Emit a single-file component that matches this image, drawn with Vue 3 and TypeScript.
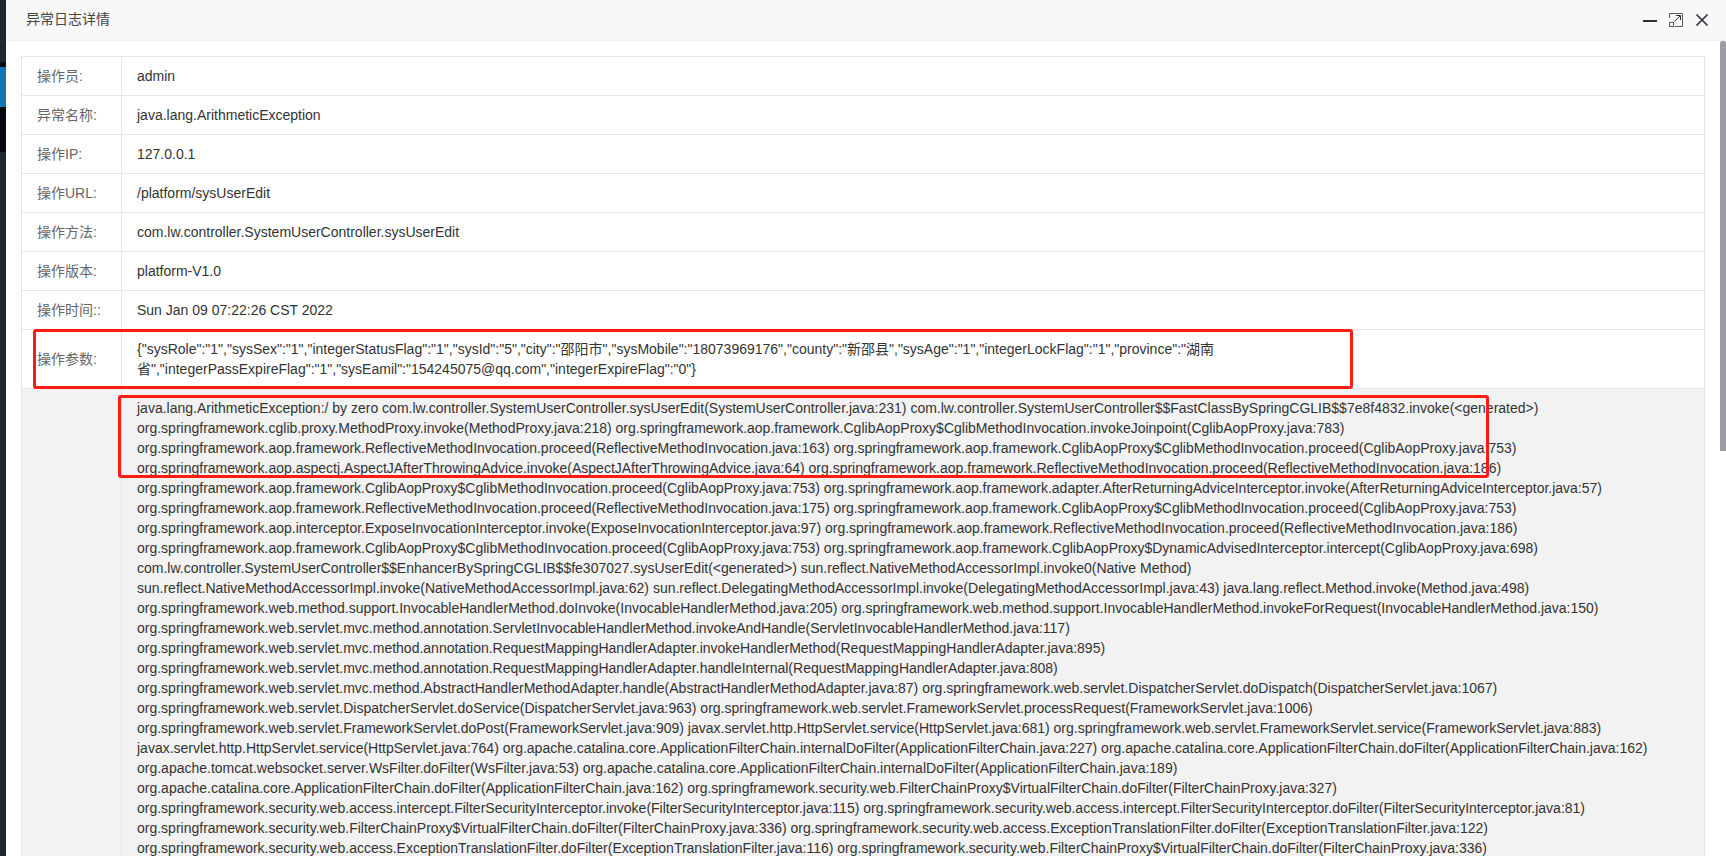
<script setup lang="ts">
interface Row {
  label: string
  value: string
}

const rows: Row[] = [
  { label: '操作员:', value: 'admin' },
  { label: '异常名称:', value: 'java.lang.ArithmeticException' },
  { label: '操作IP:', value: '127.0.0.1' },
  { label: '操作URL:', value: '/platform/sysUserEdit' },
  { label: '操作方法:', value: 'com.lw.controller.SystemUserController.sysUserEdit' },
  { label: '操作版本:', value: 'platform-V1.0' },
  { label: '操作时间::', value: 'Sun Jan 09 07:22:26 CST 2022' },
]

const params: string[] = [
  '{"sysRole":"1","sysSex":"1","integerStatusFlag":"1","sysId":"5","city":"邵阳市","sysMobile":"18073969176","county":"新邵县","sysAge":"1","integerLockFlag":"1","province":"湖南',
  '省","integerPassExpireFlag":"1","sysEamil":"154245075@qq.com","integerExpireFlag":"0"}',
]

const sf = 'org.springframework'
const trace: string[] = [
  'java.lang.ArithmeticException:/ by zero com.lw.controller.SystemUserController.sysUserEdit(SystemUserController.java:231) com.lw.controller.SystemUserController$$FastClassBySpringCGLIB$$7e8f4832.invoke(<generated>)',
  `${sf}.cglib.proxy.MethodProxy.invoke(MethodProxy.java:218) ${sf}.aop.framework.CglibAopProxy$CglibMethodInvocation.invokeJoinpoint(CglibAopProxy.java:783)`,
  `${sf}.aop.framework.ReflectiveMethodInvocation.proceed(ReflectiveMethodInvocation.java:163) ${sf}.aop.framework.CglibAopProxy$CglibMethodInvocation.proceed(CglibAopProxy.java:753)`,
  `${sf}.aop.aspectj.AspectJAfterThrowingAdvice.invoke(AspectJAfterThrowingAdvice.java:64) ${sf}.aop.framework.ReflectiveMethodInvocation.proceed(ReflectiveMethodInvocation.java:186)`,
  `${sf}.aop.framework.CglibAopProxy$CglibMethodInvocation.proceed(CglibAopProxy.java:753) ${sf}.aop.framework.adapter.AfterReturningAdviceInterceptor.invoke(AfterReturningAdviceInterceptor.java:57)`,
  `${sf}.aop.framework.ReflectiveMethodInvocation.proceed(ReflectiveMethodInvocation.java:175) ${sf}.aop.framework.CglibAopProxy$CglibMethodInvocation.proceed(CglibAopProxy.java:753)`,
  `${sf}.aop.interceptor.ExposeInvocationInterceptor.invoke(ExposeInvocationInterceptor.java:97) ${sf}.aop.framework.ReflectiveMethodInvocation.proceed(ReflectiveMethodInvocation.java:186)`,
  `${sf}.aop.framework.CglibAopProxy$CglibMethodInvocation.proceed(CglibAopProxy.java:753) ${sf}.aop.framework.CglibAopProxy$DynamicAdvisedInterceptor.intercept(CglibAopProxy.java:698)`,
  'com.lw.controller.SystemUserController$$EnhancerBySpringCGLIB$$fe307027.sysUserEdit(<generated>) sun.reflect.NativeMethodAccessorImpl.invoke0(Native Method)',
  'sun.reflect.NativeMethodAccessorImpl.invoke(NativeMethodAccessorImpl.java:62) sun.reflect.DelegatingMethodAccessorImpl.invoke(DelegatingMethodAccessorImpl.java:43) java.lang.reflect.Method.invoke(Method.java:498)',
  `${sf}.web.method.support.InvocableHandlerMethod.doInvoke(InvocableHandlerMethod.java:205) ${sf}.web.method.support.InvocableHandlerMethod.invokeForRequest(InvocableHandlerMethod.java:150)`,
  `${sf}.web.servlet.mvc.method.annotation.ServletInvocableHandlerMethod.invokeAndHandle(ServletInvocableHandlerMethod.java:117)`,
  `${sf}.web.servlet.mvc.method.annotation.RequestMappingHandlerAdapter.invokeHandlerMethod(RequestMappingHandlerAdapter.java:895)`,
  `${sf}.web.servlet.mvc.method.annotation.RequestMappingHandlerAdapter.handleInternal(RequestMappingHandlerAdapter.java:808)`,
  `${sf}.web.servlet.mvc.method.AbstractHandlerMethodAdapter.handle(AbstractHandlerMethodAdapter.java:87) ${sf}.web.servlet.DispatcherServlet.doDispatch(DispatcherServlet.java:1067)`,
  `${sf}.web.servlet.DispatcherServlet.doService(DispatcherServlet.java:963) ${sf}.web.servlet.FrameworkServlet.processRequest(FrameworkServlet.java:1006)`,
  `${sf}.web.servlet.FrameworkServlet.doPost(FrameworkServlet.java:909) javax.servlet.http.HttpServlet.service(HttpServlet.java:681) ${sf}.web.servlet.FrameworkServlet.service(FrameworkServlet.java:883)`,
  'javax.servlet.http.HttpServlet.service(HttpServlet.java:764) org.apache.catalina.core.ApplicationFilterChain.internalDoFilter(ApplicationFilterChain.java:227) org.apache.catalina.core.ApplicationFilterChain.doFilter(ApplicationFilterChain.java:162)',
  'org.apache.tomcat.websocket.server.WsFilter.doFilter(WsFilter.java:53) org.apache.catalina.core.ApplicationFilterChain.internalDoFilter(ApplicationFilterChain.java:189)',
  `org.apache.catalina.core.ApplicationFilterChain.doFilter(ApplicationFilterChain.java:162) ${sf}.security.web.FilterChainProxy$VirtualFilterChain.doFilter(FilterChainProxy.java:327)`,
  `${sf}.security.web.access.intercept.FilterSecurityInterceptor.invoke(FilterSecurityInterceptor.java:115) ${sf}.security.web.access.intercept.FilterSecurityInterceptor.doFilter(FilterSecurityInterceptor.java:81)`,
  `${sf}.security.web.FilterChainProxy$VirtualFilterChain.doFilter(FilterChainProxy.java:336) ${sf}.security.web.access.ExceptionTranslationFilter.doFilter(ExceptionTranslationFilter.java:122)`,
  `${sf}.security.web.access.ExceptionTranslationFilter.doFilter(ExceptionTranslationFilter.java:116) ${sf}.security.web.FilterChainProxy$VirtualFilterChain.doFilter(FilterChainProxy.java:336)`,
]
</script>

<template>
  <div class="page">
    <aside class="side">
      <div class="seg-a"></div>
      <div class="seg-b"></div>
      <div class="seg-c"></div>
      <div class="seg-d"></div>
      <div class="seg-e"></div>
    </aside>

    <section class="modal">
      <header class="head">
        <span class="title">异常日志详情</span>
        <div class="tools">
          <svg class="ico" viewBox="0 0 20 20" aria-hidden="true">
            <rect x="3" y="10" width="14" height="2" fill="#2e2d3c" />
          </svg>
          <svg class="ico" viewBox="0 0 20 20" aria-hidden="true">
            <path d="M3.5 8V3.5H16.5V16.5H9" fill="none" stroke="#5a5a66" stroke-width="1" />
            <rect x="3.5" y="12.5" width="4" height="4" fill="none" stroke="#5a5a66" stroke-width="1" />
            <path d="M8.5 11.5L14 6M10 5.5H14.5V10" fill="none" stroke="#2e2d3c" stroke-width="1" />
          </svg>
          <svg class="ico" viewBox="0 0 20 20" aria-hidden="true">
            <path d="M4.5 4.5L15.5 15.5M15.5 4.5L4.5 15.5" fill="none" stroke="#2e2d3c" stroke-width="1.6" />
          </svg>
        </div>
      </header>

      <div class="body">
        <table class="grid">
          <colgroup>
            <col class="col-label" />
            <col />
          </colgroup>
          <tbody>
            <tr v-for="row in rows" :key="row.label">
              <td class="label">{{ row.label }}</td>
              <td class="value">{{ row.value }}</td>
            </tr>
            <tr>
              <td class="label">操作参数:</td>
              <td class="value">
                <div v-for="line in params" :key="line" class="line">{{ line }}</div>
              </td>
            </tr>
            <tr class="shaded">
              <td class="label"></td>
              <td class="value">
                <div v-for="(line, i) in trace" :key="i" class="line">{{ line }}</div>
              </td>
            </tr>
          </tbody>
        </table>
        <div class="mark mark-params"></div>
        <div class="mark mark-trace"></div>
        <div class="thumb"></div>
      </div>
    </section>
  </div>
</template>

<style scoped>
.page {
  display: flex;
  height: 856px;
  overflow: hidden;
  background: #fff;
  font-family: "Liberation Sans", "Noto Sans CJK SC", sans-serif;
  font-size: 14px;
  line-height: 20px;
  color: #333;
}

.side {
  flex: 0 0 6px;
  display: flex;
  flex-direction: column;
}
.seg-a { height: 62px; background: #1f2730; }
.seg-b { height: 5px; background: #0a0c10; }
.seg-c { height: 40px; background: #1275b5; }
.seg-d { height: 45px; background: #05090d; }
.seg-e { flex: 1; background: #1d2730; }

.modal {
  flex: 1;
  min-width: 0;
  display: flex;
  flex-direction: column;
}

.head {
  flex: 0 0 40px;
  display: flex;
  align-items: center;
  justify-content: space-between;
  padding: 0 14px 0 20px;
  background: #f8f8f8;
  border-bottom: 1px solid #eee;
}
.title { color: #444; padding-bottom: 2px; }
.tools { display: flex; gap: 6px; }
.ico { display: block; width: 20px; height: 20px; }

.body {
  position: relative;
  flex: 1;
  min-height: 0;
  overflow: hidden;
  padding: 15px 21px 0 15px;
}

.grid {
  width: 100%;
  table-layout: fixed;
  border-collapse: collapse;
  border: 1px solid #e6e6e6;
}
.col-label { width: 100px; }
.grid td {
  padding: 9px 15px;
  border: 1px solid #e6e6e6;
  vertical-align: middle;
}
.label { color: #666; }
.value { color: #333; }
.line { white-space: nowrap; }
.shaded td { background: #f2f2f2; }

.mark {
  position: absolute;
  box-sizing: border-box;
  border: 3px solid #ff1a12;
  border-radius: 3px;
  pointer-events: none;
}
.mark-params { left: 27px; top: 288px; width: 1320px; height: 60px; }
.mark-trace { left: 112px; top: 354px; width: 1371px; height: 83px; }

.thumb {
  position: absolute;
  right: 0;
  top: 0;
  width: 6px;
  height: 410px;
  background: #9c9ca2;
  border-radius: 2px 2px 0 0;
}
</style>

<style>
html, body { margin: 0; overflow: hidden; background: #fff; }
</style>
